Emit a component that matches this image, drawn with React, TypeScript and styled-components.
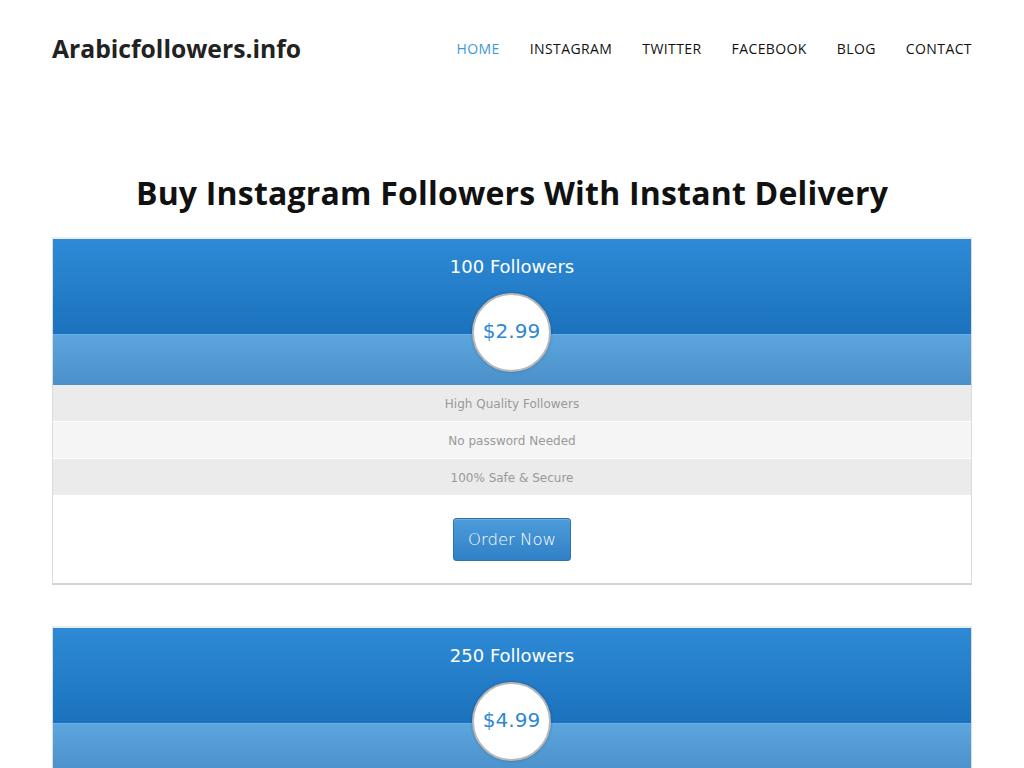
import React from "react";
import styled, { createGlobalStyle } from "styled-components";

const Global = createGlobalStyle`
  html, body { margin: 0; padding: 0; background: #fff; }
  body { font-family: "DejaVu Sans", sans-serif; }
  * { box-sizing: border-box; }
`;

const Page = styled.div`
  width: 920px;
  margin: 0 auto;
`;

const Header = styled.header`
  height: 97px;
  display: flex;
  align-items: center;
  justify-content: space-between;
`;

const Logo = styled.div`
  font-family: "Open Sans", sans-serif;
  font-weight: 700;
  font-size: 24.7px;
  color: #222;
`;

const Nav = styled.nav`
  display: flex;
  gap: 30px;
`;

const NavLink = styled.a<{ $active?: boolean }>`
  font-family: "Open Sans", sans-serif;
  font-size: 14px;
  letter-spacing: 0.4px;
  text-transform: uppercase;
  color: ${(p) => (p.$active ? "#3a9ad9" : "#111")};
  text-decoration: none;
`;

const Title = styled.h1`
  margin: 77px 0 25px;
  text-align: center;
  font-family: "Open Sans", sans-serif;
  font-weight: 700;
  font-size: 32px;
  line-height: 38px;
  letter-spacing: 0.2px;
  color: #111;
`;

const Card = styled.div`
  border: 1px solid #dcdcdc;
  border-top: 2px solid #e8eef3;
  border-bottom: 2px solid #d4d4d4;
  margin-bottom: 41px;
  background: #fff;
`;

const Top = styled.div`
  height: 95px;
  background: linear-gradient(#2e8ad6, #1b72bd);
  color: #fff;
  text-align: center;
  font-size: 18px;
  padding-top: 17px;
`;

const Band = styled.div`
  position: relative;
  height: 51px;
  background: linear-gradient(#5ca5dd, #4a90ca);
  border-top: 1px solid #69b0e6;
`;

const Circle = styled.div`
  position: absolute;
  left: 50%;
  top: -42px;
  width: 79px;
  height: 79px;
  margin-left: -40px;
  padding-bottom: 3px;
  border-radius: 50%;
  background: #fff;
  border: 2px solid #b8b8b8;
  box-shadow: 0 0 3px rgba(0, 0, 0, 0.25);
  display: flex;
  align-items: center;
  justify-content: center;
  color: #2d88d2;
  font-size: 20px;
`;

const Row = styled.div<{ $alt?: boolean }>`
  height: 37px;
  padding-top: 2px;
  display: flex;
  align-items: center;
  justify-content: center;
  background: ${(p) => (p.$alt ? "#f5f5f5" : "#ebebeb")};
  border-bottom: 1px solid #fff;
  color: #999;
  font-size: 12px;
`;

const Footer = styled.div`
  height: 87px;
  display: flex;
  align-items: center;
  justify-content: center;
`;

const Button = styled.button`
  width: 118px;
  height: 43px;
  border-radius: 3px;
  border: 1px solid #2f74b0;
  background: linear-gradient(#4d9cdb, #2f80c6);
  color: #fff;
  font-family: "DejaVu Sans", sans-serif;
  font-weight: 200;
  font-size: 16.5px;
  cursor: pointer;
  box-shadow: inset 0 1px 0 rgba(255, 255, 255, 0.2);
`;

const plans = [
  { count: "100 Followers", price: "$2.99" },
  { count: "250 Followers", price: "$4.99" },
  { count: "500 Followers", price: "$6.99" },
];

const features = ["High Quality Followers", "No password Needed", "100% Safe & Secure"];

export default function App() {
  return (
    <>
      <Global />
      <Page>
        <Header>
          <Logo>Arabicfollowers.info</Logo>
          <Nav>
            <NavLink $active href="#">Home</NavLink>
            <NavLink href="#">Instagram</NavLink>
            <NavLink href="#">Twitter</NavLink>
            <NavLink href="#">Facebook</NavLink>
            <NavLink href="#">Blog</NavLink>
            <NavLink href="#">Contact</NavLink>
          </Nav>
        </Header>
        <Title>Buy Instagram Followers With Instant Delivery</Title>
        {plans.map((p) => (
          <Card key={p.count}>
            <Top>{p.count}</Top>
            <Band>
              <Circle>{p.price}</Circle>
            </Band>
            {features.map((f, i) => (
              <Row key={f} $alt={i === 1}>{f}</Row>
            ))}
            <Footer>
              <Button>Order Now</Button>
            </Footer>
          </Card>
        ))}
      </Page>
    </>
  );
}
